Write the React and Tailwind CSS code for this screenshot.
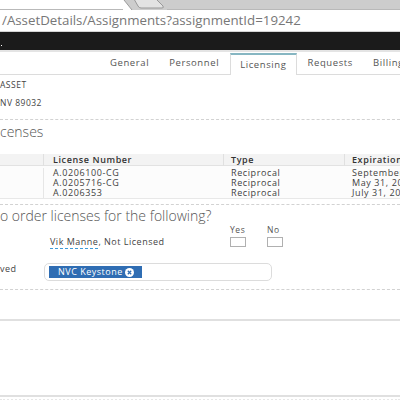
const tabs = ['General', 'Personnel', 'Licensing', 'Requests', 'Billing']

const licenses = [
  { number: 'A.0206100-CG', type: 'Reciprocal', expires: 'September 30, 2018' },
  { number: 'A.0205716-CG', type: 'Reciprocal', expires: 'May 31, 2018' },
  { number: 'A.0206353', type: 'Reciprocal', expires: 'July 31, 2018' },
]

function Dashed({ className = '' }) {
  return <div className={`h-0 border-t border-dashed border-[#d2d2d2] ${className}`} />
}

export default function App() {
  return (
    <div className="h-[400px] w-[400px] overflow-hidden bg-white font-['Open_Sans',sans-serif] text-[#444]">
      {/* browser chrome */}
      <div className="flex h-[10px] border-b border-[#b9b9b9]">
        <div className="w-[123px] bg-white" />
        <svg width="44" height="10" viewBox="0 0 44 10" className="shrink-0">
          <rect width="44" height="10" fill="#cdcdcd" />
          <polygon points="0,0 1,0 9,10 0,10" fill="#ffffff" />
          <line x1="1" y1="0" x2="9" y2="10" stroke="#9c9c9c" strokeWidth="1" />
          <path d="M11 -1 L33 -1 L40 6 Q41 8 39 8 L18 8 Q16 8 15 6 Z" fill="#e3e3e3" stroke="#999" strokeWidth="1" />
        </svg>
        <div className="flex-1 bg-[#cdcdcd]" />
      </div>
      <div className="h-[22px] border-b border-[#d4d4d4] pl-[2px] text-[13.3px] leading-[21px] text-[#777]">
        /AssetDetails/Assignments?assignmentId=19242
      </div>
      <div className="relative h-[18px] bg-[#1b1b1b]">
        <span className="absolute bottom-[4px] left-[1px] h-[1px] w-[1px] bg-white" />
      </div>
      <div className="h-[2px] bg-[#e4e4e4]" />

      {/* tabs */}
      <div className="flex h-[23px] items-end gap-[2px] border-b border-[#dcdcdc] pl-[101px]">
        {tabs.map((t) =>
          t === 'Licensing' ? (
            <div
              key={t}
              className="-mb-px flex h-[22px] items-center border-x border-t-2 border-x-[#dcdcdc] border-t-[#86b6c2] bg-white px-[9px] text-[9.5px] font-medium tracking-[0.6px] text-[#555]"
            >
              {t}
            </div>
          ) : (
            <div key={t} className="flex h-[21px] shrink-0 items-center px-[9px] text-[9.5px] font-medium tracking-[0.6px] text-[#555]">
              {t}
            </div>
          ),
        )}
      </div>

      {/* asset info */}
      <div className="mt-[5px] h-[10px] text-[8.5px] font-medium leading-[10px] tracking-[0.5px] text-[#444]">ASSET</div>
      <div className="mt-[8px] h-[10px] text-[8.5px] font-medium leading-[10px] tracking-[0.5px] text-[#444]">NV 89032</div>
      <Dashed className="mt-[11px]" />

      <div className="mt-[3px] h-[18px] text-[14px] font-light leading-[18px] text-[#555]">censes</div>

      {/* licenses table */}
      <div className="mt-[13px] text-[9px] tracking-[0.6px]">
        <div className="grid h-[12px] grid-cols-[43px_180px_121px_1fr] border-b border-[#e2e2e2] bg-[#f3f3f3] font-semibold text-[#333]">
          <div />
          <div className="border-l border-[#e0e0e0] pl-[9px] leading-[12px]">License Number</div>
          <div className="border-l border-[#e0e0e0] pl-[7px] leading-[12px]">Type</div>
          <div className="overflow-hidden whitespace-nowrap border-l border-[#e0e0e0] pl-[7px] leading-[12px]">Expiration Date</div>
        </div>
        <div className="border-b border-[#e8e8e8] bg-[#fcfcfc] pt-[2px]">
          {licenses.map((l) => (
            <div key={l.number} className="grid h-[10px] grid-cols-[43px_180px_121px_1fr] font-medium text-[#3f3f3f]">
              <div />
              <div className="border-l border-[#e6e6e6] pl-[9px] leading-[10px]">{l.number}</div>
              <div className="pl-[8px] leading-[10px]">{l.type}</div>
              <div className="overflow-hidden whitespace-nowrap pl-[8px] leading-[10px]">{l.expires}</div>
            </div>
          ))}
        </div>
      </div>
      <Dashed className="mt-[5px]" />

      <div className="mt-[2px] h-[18px] text-[14px] font-light leading-[18px] text-[#555]">
        o order licenses for the following?
      </div>

      {/* yes / no */}
      <div className="flex h-[10px] text-[8.5px] font-medium leading-[10px] tracking-[0.6px] text-[#555]">
        <div className="ml-[230px] w-[37px]">Yes</div>
        <div>No</div>
      </div>
      <div className="mt-[2px] flex h-[10px] items-center text-[9px] font-medium tracking-[0.5px] text-[#444]">
        <div className="ml-[50px] w-[180px] whitespace-nowrap leading-[10px]">
          <span className="border-b border-dashed border-[#3d9bd8]">Vik Manne</span>, Not Licensed
        </div>
        <div className="h-[10px] w-[16px] border border-[#b0b0b0] bg-white" />
        <div className="ml-[21px] h-[10px] w-[16px] border border-[#b0b0b0] bg-white" />
      </div>

      {/* approved row */}
      <div className="mt-[16px] flex h-[18px] items-center text-[9px] font-medium tracking-[0.5px] text-[#444]">
        <div className="w-[44px] self-start pt-[1px] leading-[10px]">ved</div>
        <div className="flex h-[18px] w-[228px] items-center rounded-[5px] border border-[#dcdcdc] bg-white pl-[4px]">
          <span className="flex h-[12px] w-[93px] items-center bg-[#2f6db3] pl-[9px] text-[9px] font-medium tracking-[0.5px] text-white">
            NVC Keystone
            <span className="ml-[2px] flex h-[9px] w-[9px] items-center justify-center rounded-full bg-white">
              <svg width="5" height="5" viewBox="0 0 5 5">
                <path d="M0.8 0.8 L4.2 4.2 M4.2 0.8 L0.8 4.2" stroke="#2f6db3" strokeWidth="1.3" />
              </svg>
            </span>
          </span>
        </div>
      </div>
      <Dashed className="mt-[8px]" />

      <div className="mt-[29px] h-[2px] bg-[#e0e0e0]" />
      <div className="mt-[74px] h-[2px] bg-[#e0e0e0]" />
      <div className="mt-[2px] h-0 border-t-2 border-dotted border-[#e6e6e6]" />
    </div>
  )
}
